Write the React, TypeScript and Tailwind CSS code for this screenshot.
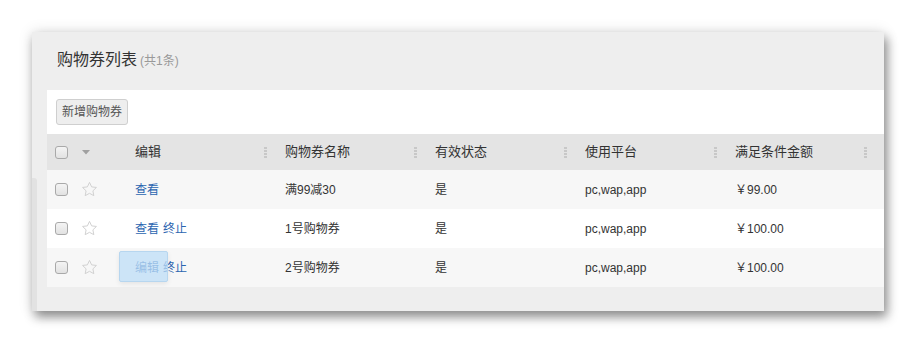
const font = { fontFamily: '"Liberation Sans", "Noto Sans CJK SC", Arial, sans-serif' };

type Coupon = {
  actions: string[];
  name: string;
  valid: string;
  platform: string;
  amount: string;
};

const rows: Coupon[] = [
  { actions: ["查看"], name: "满99减30", valid: "是", platform: "pc,wap,app", amount: "￥99.00" },
  { actions: ["查看", "终止"], name: "1号购物券", valid: "是", platform: "pc,wap,app", amount: "￥100.00" },
  { actions: ["编辑", "终止"], name: "2号购物券", valid: "是", platform: "pc,wap,app", amount: "￥100.00" },
];

const columns = ["编辑", "购物券名称", "有效状态", "使用平台", "满足条件金额"];

function Checkbox() {
  return (
    <span className="block w-[13px] h-[13px] rounded-[3px] border border-[#a9a9a9] bg-gradient-to-b from-[#f4f4f4] to-[#e2e2e2]" />
  );
}

function Star() {
  return (
    <svg width="17" height="17" viewBox="0 0 24 24" fill="none" stroke="#d0d0d0" strokeWidth="1.4" strokeLinejoin="round">
      <path d="M12 2l3 6.3 6.8.8-5 4.8 1.3 6.8L12 17.4l-6.1 3.3 1.3-6.8-5-4.8 6.8-.8z" />
    </svg>
  );
}

function Grip() {
  return (
    <span className="flex flex-col gap-[1px] mr-[3px]">
      <span className="block w-[3px] h-[2px] bg-[#c8c8c8]" />
      <span className="block w-[3px] h-[2px] bg-[#c8c8c8]" />
      <span className="block w-[3px] h-[2px] bg-[#c8c8c8]" />
      <span className="block w-[3px] h-[2px] bg-[#c8c8c8]" />
    </span>
  );
}

export default function App() {
  return (
    <div className="w-[916px] h-[343px] bg-white pt-[32px] pl-[32px]" style={font}>
      <div className="relative w-[852px] h-[279px] bg-[#eeeeee] shadow-[3px_6px_10px_rgba(0,0,0,0.42),0_0_14px_rgba(0,0,0,0.12)]">
        <div className="absolute left-0 top-[146px] bottom-0 w-[5px] bg-[#e2e2e2] rounded-tr-[3px]" />
        <div className="h-[58px] pl-[25px] pt-[16px] flex items-baseline">
          <span className="text-[16px] text-[#333]">购物券列表</span>
          <span className="text-[12px] text-[#999] ml-[3px]">(共1条)</span>
        </div>
        <div className="ml-[15px]">
          <div className="h-[44px] bg-white pl-[9px] pt-[9px]">
            <button className="h-[26px] w-[72px] rounded-[3px] border border-[#cfcfcf] bg-[#eeeeee] text-[12px] text-[#555]">
              新增购物券
            </button>
          </div>
          <div className="h-[36px] bg-[#e4e4e4] flex items-center text-[13px] text-[#333]">
            <div className="w-[73px] flex items-center pl-[8px]">
              <Checkbox />
              <svg className="ml-[14px]" width="8" height="5" viewBox="0 0 8 5">
                <path d="M0 0h8L4 4.5z" fill="#a0a0a0" />
              </svg>
            </div>
            {columns.map((c) => (
              <div key={c} className="w-[150px] pl-[15px] flex items-center justify-between">
                <span>{c}</span>
                <Grip />
              </div>
            ))}
          </div>
          {rows.map((r, i) => (
            <div
              key={r.name}
              className={`h-[39px] flex items-center text-[12px] text-[#333] ${i % 2 === 0 ? "bg-[#f7f7f7]" : "bg-white"}`}
            >
              <div className="w-[73px] flex items-center pl-[8px]">
                <Checkbox />
                <span className="ml-[13px]">
                  <Star />
                </span>
              </div>
              <div className="relative w-[150px] pl-[15px] h-full flex items-center gap-[4px] text-[#2b65b0]">
                {r.actions.map((a) => (
                  <span key={a}>{a}</span>
                ))}
                {i === 2 && (
                  <div className="absolute left-[-1px] top-[3px] w-[49px] h-[31px] rounded-[2px] border border-[#b7d6ef] bg-[rgba(190,222,247,0.75)] shadow-[0_2px_5px_rgba(0,0,0,0.08)]" />
                )}
              </div>
              <div className="w-[150px] pl-[15px]">{r.name}</div>
              <div className="w-[150px] pl-[15px]">{r.valid}</div>
              <div className="w-[150px] pl-[15px]">{r.platform}</div>
              <div className="w-[150px] pl-[15px]">{r.amount}</div>
            </div>
          ))}
        </div>
      </div>
    </div>
  );
}
